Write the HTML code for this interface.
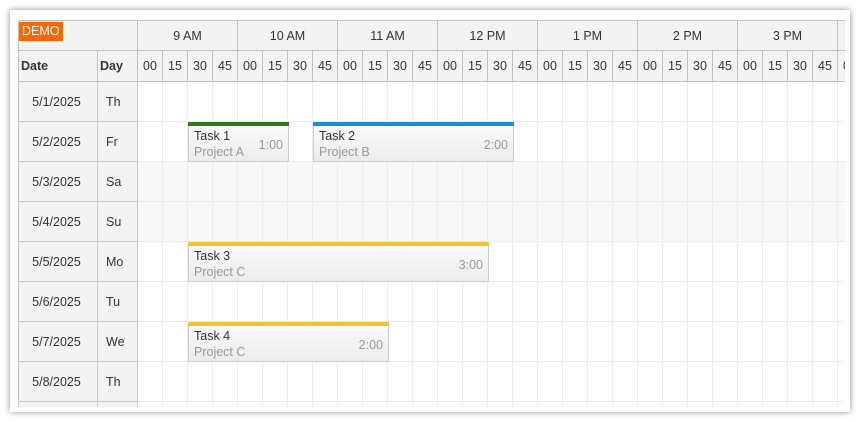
<!DOCTYPE html><html><head><style>
body{margin:0;width:860px;height:422px;background:#fff;font-family:"Liberation Sans",sans-serif;overflow:hidden;position:relative}
.panel{position:absolute;left:10px;top:10px;width:840px;height:402px;background:#fff;box-shadow:0 0 6px rgba(0,0,0,.45)}
.clip{position:absolute;left:18px;top:20px;width:827px;height:387px;overflow:hidden;box-sizing:border-box;border-left:1px solid #c0c0c0;border-top:1px solid #c0c0c0}
.a{position:absolute;box-sizing:border-box}
.h{background:#f3f3f3;border-right:1px solid #c0c0c0;border-bottom:1px solid #c0c0c0;color:#333;font-size:12.5px;display:flex;align-items:center;justify-content:center}
.rh{background:#f3f3f3;border-right:1px solid #c8c8c8;border-bottom:1px solid #c8c8c8;color:#333;font-size:12.5px;display:flex;align-items:center}
.ev{position:absolute;box-sizing:border-box;background:linear-gradient(#fbfbfb,#ececec);border:1px solid #ccc;font-size:12.5px;color:#333}
.ev .t{position:absolute;left:5px;top:6px}
.ev .p{position:absolute;left:5px;top:22px;color:#999}
.ev .d{position:absolute;right:5px;top:15px;color:#999}
.ev .b{position:absolute;left:-1px;right:-1px;top:-1px;height:4px}
</style></head><body>
<div class="panel"></div>
<div class="clip" id="c"></div>
<script>
var c=document.getElementById('c'),h='';
function A(cls,x,y,w,ht,txt,st){h+='<div class="a '+cls+'" style="left:'+x+'px;top:'+y+'px;width:'+w+'px;height:'+ht+'px;'+(st||'')+'">'+(txt||'')+'</div>';}
var days=[['5/1/2025','Th'],['5/2/2025','Fr'],['5/3/2025','Sa'],['5/4/2025','Su'],['5/5/2025','Mo'],['5/6/2025','Tu'],['5/7/2025','We'],['5/8/2025','Th'],['5/9/2025','Fr']];
for(var r=0;r<9;r++){var y=61+r*40;var bg=(r==2||r==3)?'#f8f8f8':'#fff';
A('',119,y,720,40,'','background:'+bg+';border-bottom:1px solid #eaeaea');
A('rh',-1,y,80,40,days[r][0],'justify-content:center;padding-right:2px');
A('rh',79,y,40,40,days[r][1],'padding-left:8px');}
for(var i=0;i<29;i++){A('',119+i*25+24,61,1,360,'','background:#ececec');}
A('h',-1,0,120,30,'<span style="position:absolute;left:1px;top:1px;background:#f60;color:#fff;padding:1px 3px;font-size:12.5px;line-height:17px">DEMO</span>');
A('h',-1,30,80,31,'<b>Date</b>','justify-content:flex-start;padding-left:3px');
A('h',79,30,40,31,'<b>Day</b>','justify-content:flex-start;padding-left:2px');
var hrs=['9 AM','10 AM','11 AM','12 PM','1 PM','2 PM','3 PM','4 PM'];
for(var k=0;k<8;k++){A('h',119+k*100,0,100,30,hrs[k]);var m=['00','15','30','45'];for(var j=0;j<4;j++)A('h',119+k*100+j*25,30,25,31,m[j]);}
function E(x,y,w,col,t,p,d){h+='<div class="ev" style="left:'+x+'px;top:'+y+'px;width:'+w+'px;height:40px"><div class="b" style="background:'+col+'"></div><div class="t">'+t+'</div><div class="p">'+p+'</div><div class="d">'+d+'</div></div>';}
E(169,101,101,'#38761d','Task 1','Project A','1:00');
E(294,101,201,'#1a8fd0','Task 2','Project B','2:00');
E(169,221,301,'#f1c232','Task 3','Project C','3:00');
E(169,301,201,'#f1c232','Task 4','Project C','2:00');
c.innerHTML=h;
</script>
</body></html>
